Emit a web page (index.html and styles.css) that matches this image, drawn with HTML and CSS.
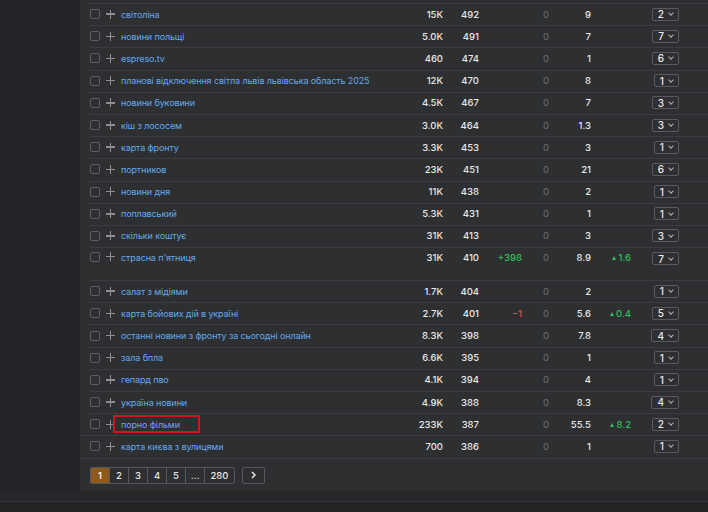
FILE: index.html
```html
<!DOCTYPE html>
<html lang="uk">
<head>
<meta charset="utf-8">
<title>Keywords</title>
<link rel="stylesheet" href="styles.css">
</head>
<body>
<div class="page">
  <aside class="side"></aside>
  <main class="panel">
    <div class="table">
      <div class="row"><span class="cb"></span><span class="plus"></span><span class="kw">світоліна</span><span class="num">15K</span><span class="num">492</span><span class="chg"></span><span class="zero">0</span><span class="num">9</span><span class="trend"></span><span class="dd-cell"><span class="dd">2<i class="chev"></i></span></span></div>
      <div class="row"><span class="cb"></span><span class="plus"></span><span class="kw">новини польщі</span><span class="num">5.0K</span><span class="num">491</span><span class="chg"></span><span class="zero">0</span><span class="num">7</span><span class="trend"></span><span class="dd-cell"><span class="dd">7<i class="chev"></i></span></span></div>
      <div class="row"><span class="cb"></span><span class="plus"></span><span class="kw">espreso.tv</span><span class="num">460</span><span class="num">474</span><span class="chg"></span><span class="zero">0</span><span class="num">1</span><span class="trend"></span><span class="dd-cell"><span class="dd">6<i class="chev"></i></span></span></div>
      <div class="row"><span class="cb"></span><span class="plus"></span><span class="kw">планові відключення світла львів львівська область 2025</span><span class="num">12K</span><span class="num">470</span><span class="chg"></span><span class="zero">0</span><span class="num">8</span><span class="trend"></span><span class="dd-cell"><span class="dd">1<i class="chev"></i></span></span></div>
      <div class="row"><span class="cb"></span><span class="plus"></span><span class="kw">новини буковини</span><span class="num">4.5K</span><span class="num">467</span><span class="chg"></span><span class="zero">0</span><span class="num">7</span><span class="trend"></span><span class="dd-cell"><span class="dd">3<i class="chev"></i></span></span></div>
      <div class="row"><span class="cb"></span><span class="plus"></span><span class="kw">кіш з лососем</span><span class="num">3.0K</span><span class="num">464</span><span class="chg"></span><span class="zero">0</span><span class="num">1.3</span><span class="trend"></span><span class="dd-cell"><span class="dd">3<i class="chev"></i></span></span></div>
      <div class="row"><span class="cb"></span><span class="plus"></span><span class="kw">карта фронту</span><span class="num">3.3K</span><span class="num">453</span><span class="chg"></span><span class="zero">0</span><span class="num">3</span><span class="trend"></span><span class="dd-cell"><span class="dd">1<i class="chev"></i></span></span></div>
      <div class="row"><span class="cb"></span><span class="plus"></span><span class="kw">портников</span><span class="num">23K</span><span class="num">451</span><span class="chg"></span><span class="zero">0</span><span class="num">21</span><span class="trend"></span><span class="dd-cell"><span class="dd">6<i class="chev"></i></span></span></div>
      <div class="row"><span class="cb"></span><span class="plus"></span><span class="kw">новини дня</span><span class="num">11K</span><span class="num">438</span><span class="chg"></span><span class="zero">0</span><span class="num">2</span><span class="trend"></span><span class="dd-cell"><span class="dd">1<i class="chev"></i></span></span></div>
      <div class="row"><span class="cb"></span><span class="plus"></span><span class="kw">поплавський</span><span class="num">5.3K</span><span class="num">431</span><span class="chg"></span><span class="zero">0</span><span class="num">1</span><span class="trend"></span><span class="dd-cell"><span class="dd">1<i class="chev"></i></span></span></div>
      <div class="row"><span class="cb"></span><span class="plus"></span><span class="kw">скільки коштує</span><span class="num">31K</span><span class="num">413</span><span class="chg"></span><span class="zero">0</span><span class="num">3</span><span class="trend"></span><span class="dd-cell"><span class="dd">3<i class="chev"></i></span></span></div>
      <div class="row tall"><span class="cb"></span><span class="plus"></span><span class="kw">страсна п'ятниця</span><span class="num">31K</span><span class="num">410</span><span class="chg up">+398</span><span class="zero">0</span><span class="num">8.9</span><span class="trend"><b class="tri"></b>1.6</span><span class="dd-cell"><span class="dd">7<i class="chev"></i></span></span></div>
      <div class="row"><span class="cb"></span><span class="plus"></span><span class="kw">салат з мідіями</span><span class="num">1.7K</span><span class="num">404</span><span class="chg"></span><span class="zero">0</span><span class="num">2</span><span class="trend"></span><span class="dd-cell"><span class="dd">1<i class="chev"></i></span></span></div>
      <div class="row"><span class="cb"></span><span class="plus"></span><span class="kw">карта бойових дій в україні</span><span class="num">2.7K</span><span class="num">401</span><span class="chg down">−1</span><span class="zero">0</span><span class="num">5.6</span><span class="trend"><b class="tri"></b>0.4</span><span class="dd-cell"><span class="dd">5<i class="chev"></i></span></span></div>
      <div class="row"><span class="cb"></span><span class="plus"></span><span class="kw">останні новини з фронту за сьогодні онлайн</span><span class="num">8.3K</span><span class="num">398</span><span class="chg"></span><span class="zero">0</span><span class="num">7.8</span><span class="trend"></span><span class="dd-cell"><span class="dd">4<i class="chev"></i></span></span></div>
      <div class="row"><span class="cb"></span><span class="plus"></span><span class="kw">зала бпла</span><span class="num">6.6K</span><span class="num">395</span><span class="chg"></span><span class="zero">0</span><span class="num">1</span><span class="trend"></span><span class="dd-cell"><span class="dd">1<i class="chev"></i></span></span></div>
      <div class="row"><span class="cb"></span><span class="plus"></span><span class="kw">гепард пво</span><span class="num">4.1K</span><span class="num">394</span><span class="chg"></span><span class="zero">0</span><span class="num">4</span><span class="trend"></span><span class="dd-cell"><span class="dd">1<i class="chev"></i></span></span></div>
      <div class="row"><span class="cb"></span><span class="plus"></span><span class="kw">україна новини</span><span class="num">4.9K</span><span class="num">388</span><span class="chg"></span><span class="zero">0</span><span class="num">8.3</span><span class="trend"></span><span class="dd-cell"><span class="dd">4<i class="chev"></i></span></span></div>
      <div class="row"><span class="cb"></span><span class="plus"></span><span class="kw marked">порно фільми<span class="mark"></span></span><span class="num">233K</span><span class="num">387</span><span class="chg"></span><span class="zero">0</span><span class="num">55.5</span><span class="trend"><b class="tri"></b>8.2</span><span class="dd-cell"><span class="dd">2<i class="chev"></i></span></span></div>
      <div class="row last"><span class="cb"></span><span class="plus"></span><span class="kw">карта києва з вулицями</span><span class="num">700</span><span class="num">386</span><span class="chg"></span><span class="zero">0</span><span class="num">1</span><span class="trend"></span><span class="dd-cell"><span class="dd">1<i class="chev"></i></span></span></div>
    </div>
    <nav class="pager">
      <div class="pages">
        <span class="pg active">1</span><span class="pg">2</span><span class="pg">3</span><span class="pg">4</span><span class="pg">5</span><span class="pg">…</span><span class="pg wide">280</span>
      </div>
      <span class="next"><svg width="7" height="8" viewBox="0 0 7 8"><path d="M2 1 L5 4 L2 7" fill="none" stroke="#e6e6e6" stroke-width="1.5"/></svg></span>
    </nav>
  </main>
</div>
<div class="footer"></div>
</body>
</html>
```

FILE: styles.css
```css
* { box-sizing: border-box; }
html, body { margin: 0; padding: 0; }
body {
  background: #242528;
  font-family: Inter, "Noto Sans", sans-serif;
  font-size: 9.5px;
  color: #e6e6e6;
  width: 708px;
  height: 512px;
  overflow: hidden;
}
.page {
  display: flex;
  height: 491px;
}
.side {
  width: 80px;
  flex: none;
  background: #242528;
}
.panel {
  flex: 1;
  background: #2e2f31;
  padding-top: 3px;
  display: flex;
  flex-direction: column;
}
.table {
  margin-left: 10px;
}
.row {
  display: grid;
  grid-template-columns: 10px 21px 292px 30px 36px 43px 48px 21px 40px 48px;
  align-items: center;
  height: 22.2px;
  padding-bottom: 1px;
  border-top: 1px solid #3c3d40;
  white-space: nowrap;
}
.row.tall {
  height: 33px;
  align-items: start;
  padding-top: 4px;
  padding-bottom: 0;
}
.row.last {
  border-bottom: 1px solid #3c3d40;
  margin-left: -10px;
  padding-left: 10px;
  height: 23.2px;
}
.cb {
  width: 10px;
  height: 10px;
  border: 1px solid #5d5e62;
  border-radius: 2px;
}
.plus {
  justify-self: center;
  position: relative;
  width: 9px;
  height: 9px;
}
.plus::before, .plus::after {
  content: "";
  position: absolute;
  background: #8e8f93;
}
.plus::before { left: 3.75px; top: 0; width: 1.5px; height: 9px; }
.plus::after { top: 3.75px; left: 0; height: 1.5px; width: 9px; }
.kw {
  color: #62aaec;
  font-size: 9px;
  letter-spacing: -0.12px;
  position: relative;
}
.num {
  text-align: right;
  font-weight: 500;
  color: #e8e8e8;
}
.chg {
  text-align: right;
  font-weight: 500;
}
.chg.up { color: #2fbf5a; }
.chg.down { color: #e0484d; }
.zero {
  text-align: center;
  color: #6e7074;
}
.trend {
  text-align: right;
  color: #2fbf5a;
  font-weight: 500;
}
.tri {
  display: inline-block;
  width: 0;
  height: 0;
  border-left: 2.5px solid transparent;
  border-right: 2.5px solid transparent;
  border-bottom: 4px solid #2fbf5a;
  margin-right: 2px;
  vertical-align: 1px;
}
.dd-cell {
  display: flex;
  justify-content: flex-end;
}
.dd {
  display: inline-flex;
  align-items: center;
  height: 13px;
  padding: 0 5px 0 5px;
  border: 1px solid #5a5b5f;
  border-radius: 2px;
  font-weight: 500;
  font-size: 10px;
  color: #ececec;
}
.chev {
  display: inline-block;
  width: 4px;
  height: 4px;
  border-right: 1px solid #b0b1b4;
  border-bottom: 1px solid #b0b1b4;
  transform: rotate(45deg);
  margin-left: 5px;
  margin-top: -2px;
}
.mark {
  position: absolute;
  left: -8px;
  top: -4px;
  width: 87px;
  height: 18px;
  border: 2px solid #d0161d;
}
.pager {
  display: flex;
  gap: 7px;
  margin: 8px 0 0 10px;
  height: 17px;
}
.pages {
  display: flex;
  border: 1px solid #57585c;
  border-radius: 2px;
  overflow: hidden;
}
.pg {
  width: 19px;
  display: flex;
  align-items: center;
  justify-content: center;
  border-left: 1px solid #57585c;
  font-weight: 500;
  color: #e6e6e6;
}
.pg:first-child { border-left: none; width: 18px; }
.pg.wide { width: 30px; }
.pg.active {
  background: #8b5a1c;
  color: #fff;
}
.next {
  width: 23px;
  border: 1px solid #57585c;
  border-radius: 2px;
  display: flex;
  align-items: center;
  justify-content: center;
}
.footer {
  height: 21px;
  background: #232426;
  border-top: 10px solid #262729;
  position: relative;
}
.footer::before {
  content: "";
  display: block;
  height: 1px;
  background: #35363a;
}
```
